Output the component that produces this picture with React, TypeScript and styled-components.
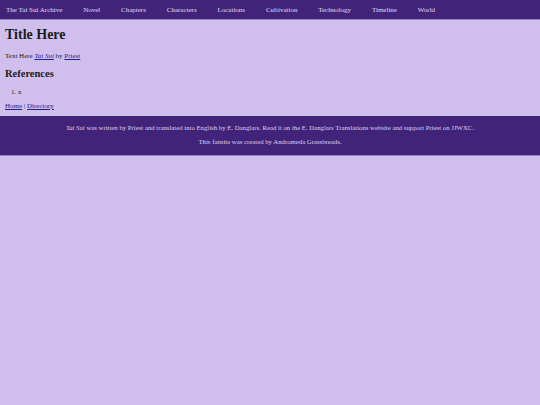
import styled, { createGlobalStyle } from "styled-components";

// page-wide reset and colours
const GlobalStyle = createGlobalStyle`
  html, body {
    margin: 0;
    padding: 0;
    background: #d0bfed;
    font-family: "Liberation Serif", "Times New Roman", serif;
    font-size: 7px;
    color: #1a1a1a;
  }
`

// top navigation bar
const Nav = styled.nav`
  display: flex;
  align-items: center;
  height: 19px;
  padding-left: 6px;
  background: #42237a;
  border-bottom: 1px solid #9b80d0;
`

const NavLink = styled.a`
  color: #e4daf6;
  text-decoration: none;
  font-size: 7px;
  margin-right: 20.8px;
  white-space: nowrap;
`

// main page body
const Main = styled.main`
  padding: 0 5px;
  overflow: hidden;
`

const Title = styled.h1`
  font-size: 14px;
  line-height: 16px;
  font-weight: bold;
  margin: 7px 0 9px;
`

const Text = styled.p`
  margin: 0;
  font-size: 7px;
  line-height: 9px;
`

const Link = styled.a`
  color: #231c8f;
  text-decoration: underline;
`

const Subtitle = styled.h2`
  font-size: 10.5px;
  line-height: 12px;
  font-weight: bold;
  margin: 7px 0 8px;
`

const List = styled.ol`
  margin: 0 0 5px;
  padding-left: 13px;
  font-size: 7px;
  line-height: 9px;
`

// footer with credits
const Footer = styled.footer`
  margin-top: 5px;
  background: #42237a;
  border-bottom: 1px solid #9b80d0;
  padding: 5px 0 6px;
  text-align: center;
  color: #ddd0f2;
  font-size: 6.75px;
`

const FooterLine = styled.p`
  margin: 0;
  line-height: 14px;
`

const navItems = ["The Tai Sui Archive", "Novel", "Chapters", "Characters", "Locations", "Cultivation", "Technology", "Timeline", "World"]

export default function App() {
  return (
    <>
      <GlobalStyle />
      <Nav>
        {navItems.map((item) => (
          <NavLink key={item} href="#">{item}</NavLink>
        ))}
      </Nav>
      <Main>
        <Title>Title Here</Title>
        <Text>
          Text Here <Link href="#"><i>Tai Sui</i></Link> by <Link href="#">Priest</Link>
        </Text>
        <Subtitle>References</Subtitle>
        <List>
          <li>x</li>
        </List>
        <Text>
          <Link href="#">Home</Link> | <Link href="#">Directory</Link>
        </Text>
      </Main>
      <Footer>
        <FooterLine>
          <i>Tai Sui</i> was written by Priest and translated into English by E. Danglars. Read it on the E. Danglars Translations website and support Priest on JJWXC.
        </FooterLine>
        <FooterLine>This fansite was created by Andromeda Grassbreads.</FooterLine>
      </Footer>
    </>
  )
}
